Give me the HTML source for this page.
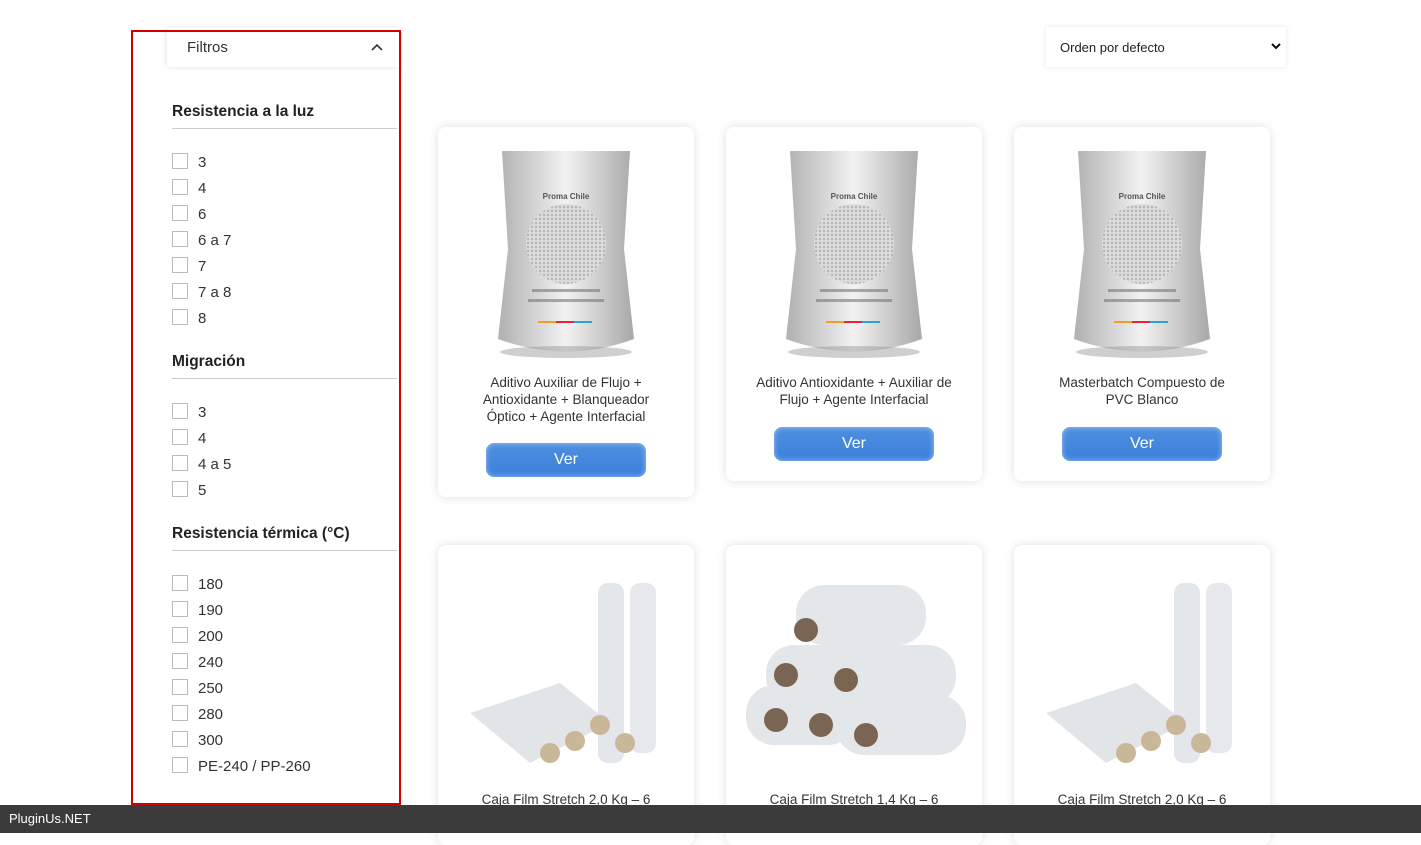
<!DOCTYPE html>
<html><head><meta charset="utf-8"><style>
*{box-sizing:border-box;margin:0;padding:0}
body{width:1421px;height:833px;overflow:hidden;background:#fff;font-family:"Liberation Sans",sans-serif;color:#2b2b2b;position:relative}
.side{position:absolute;left:131px;top:30px;width:270px;height:775px;border:2px solid #d40000;z-index:2}
.fh{position:absolute;left:167px;top:28px;width:232px;height:39px;background:#fff;box-shadow:0 0 6px rgba(0,0,0,.12);font-size:15px;color:#333;padding:11px 0 0 20px}
.fh svg{position:absolute;right:16px;top:15px}
h3{position:absolute;left:172px;width:225px;font-size:15.5px;font-weight:bold;color:#222;border-bottom:1px solid #ccc;padding-bottom:7px}
.it{position:absolute;left:172px;font-size:15px;color:#333}
.it i{display:inline-block;width:16px;height:16px;border:1px solid #bbb;vertical-align:-2px;margin-right:10px}
.sel{position:absolute;left:1046px;top:27px;width:240px;height:40px;background:#fff;box-shadow:0 0 5px rgba(0,0,0,.1);font-size:13px;padding:13px 0 0 14px;color:#222}
.sel svg{position:absolute;right:5px;top:16px}
.card{position:absolute;width:256px;background:#fff;border-radius:8px;box-shadow:0 0 10px rgba(0,0,0,.13);text-align:center}
.t{position:absolute;left:0;width:256px;font-size:13.5px;line-height:17px;color:#333;padding:0 30px}
.btn{position:absolute;left:48px;width:160px;height:34px;border-radius:8px;background:linear-gradient(#4f8fdf,#3a7fdc);box-shadow:inset 0 0 6px rgba(255,255,255,.5);color:#fff;font-size:16px;line-height:34px}
.bar{position:absolute;left:0;top:805px;width:1421px;height:28px;background:#3b3b3b;color:#fff;font-size:13px;padding:6px 0 0 9px;z-index:3}
</style></head><body>
<div class="side"></div>
<div class="fh">Filtros<svg width="12" height="8" viewBox="0 0 12 8"><path d="M1 7L6 2L11 7" stroke="#333" stroke-width="1.6" fill="none"/></svg></div>
<h3 style="top:103px">Resistencia a la luz</h3>
<div class="it" style="top:153px"><i></i>3</div>
<div class="it" style="top:179px"><i></i>4</div>
<div class="it" style="top:205px"><i></i>6</div>
<div class="it" style="top:231px"><i></i>6 a 7</div>
<div class="it" style="top:257px"><i></i>7</div>
<div class="it" style="top:283px"><i></i>7 a 8</div>
<div class="it" style="top:309px"><i></i>8</div>
<h3 style="top:353px">Migración</h3>
<div class="it" style="top:403px"><i></i>3</div>
<div class="it" style="top:429px"><i></i>4</div>
<div class="it" style="top:455px"><i></i>4 a 5</div>
<div class="it" style="top:481px"><i></i>5</div>
<h3 style="top:525px">Resistencia térmica (°C)</h3>
<div class="it" style="top:575px"><i></i>180</div>
<div class="it" style="top:601px"><i></i>190</div>
<div class="it" style="top:627px"><i></i>200</div>
<div class="it" style="top:653px"><i></i>240</div>
<div class="it" style="top:679px"><i></i>250</div>
<div class="it" style="top:705px"><i></i>280</div>
<div class="it" style="top:731px"><i></i>300</div>
<div class="it" style="top:757px"><i></i>PE-240 / PP-260</div>
<div class="sel">Orden por defecto<svg width="10" height="7" viewBox="0 0 10 7"><path d="M1 1L5 5L9 1" stroke="#111" stroke-width="2" fill="none"/></svg></div>

<svg width="0" height="0" style="position:absolute"><defs>
<linearGradient id="bg" x1="0" x2="1"><stop offset="0" stop-color="#b0b0b0"/><stop offset=".5" stop-color="#f2f2f2"/><stop offset="1" stop-color="#a8a8a8"/></linearGradient>
<pattern id="dots" width="4" height="4" patternUnits="userSpaceOnUse"><rect width="4" height="4" fill="#dcdcdc"/><circle cx="2" cy="2" r="1.2" fill="#b5b5b5"/></pattern>
<g id="bag"><path d="M4 2L132 2L126 100L136 190Q68 215 0 190L10 100Z" fill="url(#bg)"/><ellipse cx="68" cy="203" rx="66" ry="6" fill="#888" opacity=".4"/><circle cx="68" cy="95" r="40" fill="url(#dots)"/><rect x="34" y="140" width="68" height="3" fill="#777" opacity=".6"/><rect x="30" y="150" width="76" height="3" fill="#777" opacity=".6"/><rect x="40" y="172" width="18" height="2" fill="#f0a020"/><rect x="58" y="172" width="18" height="2" fill="#e23"/><rect x="76" y="172" width="18" height="2" fill="#29a0e0"/><text x="68" y="50" font-size="8" font-family="Liberation Sans" font-weight="bold" fill="#555" text-anchor="middle">Proma Chile</text></g>
<g id="rolls"><rect x="128" y="10" width="26" height="180" rx="10" fill="#e3e6ea"/><rect x="160" y="10" width="26" height="170" rx="10" fill="#e6e8ec"/><path d="M0 140L90 110L140 150L60 190Z" fill="#e2e5e8"/><circle cx="130" cy="152" r="10" fill="#c9b79a"/><circle cx="105" cy="168" r="10" fill="#c9b79a"/><circle cx="80" cy="180" r="10" fill="#c9b79a"/><circle cx="155" cy="170" r="10" fill="#c9b79a"/></g>
</defs></svg>

<div class="card" style="left:438px;top:127px;height:370px"><svg style="position:absolute;left:60px;top:22px" width="140" height="212"><use href="#bag"/></svg><div class="t" style="top:247px">Aditivo Auxiliar de Flujo + Antioxidante + Blanqueador Óptico + Agente Interfacial</div><div class="btn" style="top:316px">Ver</div></div>
<div class="card" style="left:726px;top:127px;height:354px"><svg style="position:absolute;left:60px;top:22px" width="140" height="212"><use href="#bag"/></svg><div class="t" style="top:247px">Aditivo Antioxidante + Auxiliar de Flujo + Agente Interfacial</div><div class="btn" style="top:300px">Ver</div></div>
<div class="card" style="left:1014px;top:127px;height:354px"><svg style="position:absolute;left:60px;top:22px" width="140" height="212"><use href="#bag"/></svg><div class="t" style="top:247px">Masterbatch Compuesto de PVC Blanco</div><div class="btn" style="top:300px">Ver</div></div>

<div class="card" style="left:438px;top:545px;height:300px"><svg style="position:absolute;left:32px;top:28px" width="200" height="200"><use href="#rolls"/></svg><div class="t" style="top:246px">Caja Film Stretch 2,0 Kg – 6</div></div>
<div class="card" style="left:726px;top:545px;height:300px"><svg style="position:absolute;left:20px;top:30px" width="220" height="200"><g fill="#e4e7ea"><rect x="50" y="10" width="130" height="60" rx="28"/><rect x="20" y="70" width="130" height="60" rx="28"/><rect x="80" y="70" width="130" height="60" rx="28"/><rect x="0" y="110" width="110" height="60" rx="28"/><rect x="90" y="120" width="130" height="60" rx="28"/></g><g fill="#7a6552"><circle cx="60" cy="55" r="12"/><circle cx="40" cy="100" r="12"/><circle cx="100" cy="105" r="12"/><circle cx="30" cy="145" r="12"/><circle cx="75" cy="150" r="12"/><circle cx="120" cy="160" r="12"/></g></svg><div class="t" style="top:246px">Caja Film Stretch 1,4 Kg – 6</div></div>
<div class="card" style="left:1014px;top:545px;height:300px"><svg style="position:absolute;left:32px;top:28px" width="200" height="200"><use href="#rolls"/></svg><div class="t" style="top:246px">Caja Film Stretch 2,0 Kg – 6</div></div>

<div class="bar">PluginUs.NET</div>
</body></html>
